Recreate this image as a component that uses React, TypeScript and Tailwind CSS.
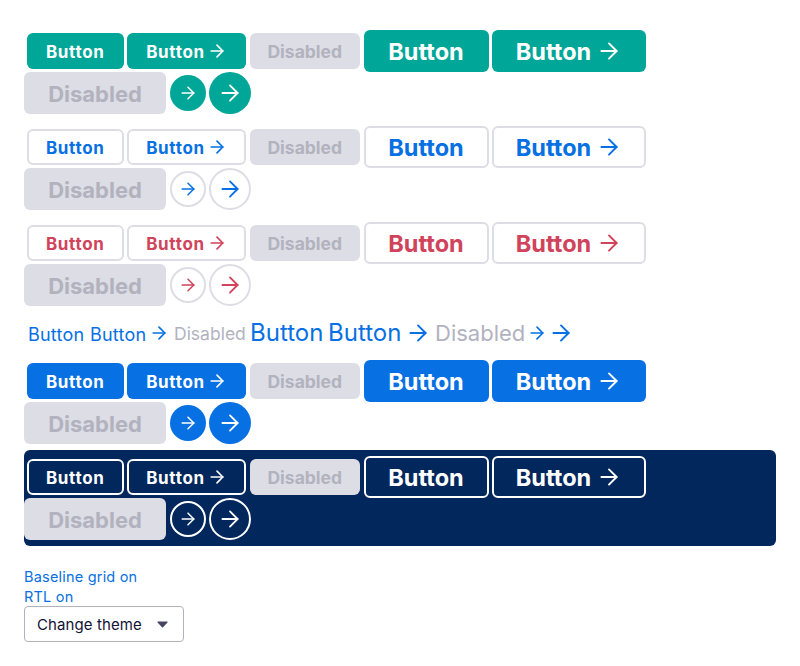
import { ArrowRight } from 'lucide-react';

const font = "font-['Inter','Noto_Sans',sans-serif]";

type Variant = {
  solid: string;
  round: string;
};

const disabledClass = 'bg-[#dddde5] text-[#b2b2bf]';

const ButtonRow = ({ solid, round }: Variant) => (
  <div className="flex flex-wrap items-center gap-x-[3.5px]">
    <div className={`ml-[3px] flex h-9 w-[96.5px] items-center justify-center rounded-md text-[17px] font-bold tracking-[0.7px] ${solid}`}>
      <span className="pt-[3px]">Button</span>
    </div>
    <div className={`flex h-9 w-[119px] items-center justify-center gap-[2px] rounded-md text-[17px] font-bold tracking-[0.7px] ${solid}`}>
      <span className="pt-[3px]">Button</span>
      <ArrowRight size={20} />
    </div>
    <div className={`flex h-9 w-[110.5px] items-center justify-center rounded-md text-[17.5px] font-bold ${disabledClass}`}>
      <span className="pt-[3px]">Disabled</span>
    </div>
    <div className={`flex h-[42px] w-[125px] items-center justify-center rounded-md text-[23.5px] font-bold ${solid}`}>
      <span className="pt-[2px]">Button</span>
    </div>
    <div className={`flex h-[42px] w-[154px] items-center justify-center gap-[5px] rounded-md text-[23.5px] font-bold ${solid}`}>
      <span className="pt-[2px]">Button</span>
      <ArrowRight size={26} strokeWidth={1.8} />
    </div>
    <div className={`flex h-[42px] w-[142px] items-center justify-center rounded-md text-[22px] font-bold ${disabledClass}`}>
      <span className="pt-[3px]">Disabled</span>
    </div>
    <div className={`flex h-9 w-9 items-center justify-center rounded-full ${round}`}>
      <ArrowRight size={20} strokeWidth={1.8} />
    </div>
    <div className={`flex h-[42px] w-[42px] items-center justify-center rounded-full ${round}`}>
      <ArrowRight size={26} strokeWidth={1.7} />
    </div>
  </div>
);

const LinkRow = () => (
  <div className="flex h-[30px] items-center pl-[4px] text-[#0770e3]">
    <span className="w-[62px] pt-[2px] text-[18px] tracking-[0.2px]">Button</span>
    <span className="flex w-[84px] items-center gap-[3px] text-[18px] tracking-[0.2px]">
      <span className="pt-[2px]">Button</span>
      <ArrowRight size={20} />
    </span>
    <span className="w-[76px] pt-[3px] text-[17.5px] text-[#b2b2bf]">Disabled</span>
    <span className="w-[78px] text-[24px]">Button</span>
    <span className="flex w-[107px] items-center gap-[4px] text-[24px]">
      Button <ArrowRight size={26} strokeWidth={1.8} />
    </span>
    <span className="w-[92px] text-[22px] text-[#b2b2bf]">Disabled</span>
    <span className="flex w-[21px] items-center">
      <ArrowRight size={20} />
    </span>
    <ArrowRight size={26} strokeWidth={1.8} />
  </div>
);

export default function App() {
  return (
    <div className={`min-h-[666px] bg-white px-6 pt-[30px] ${font}`}>
      <div className="mb-3">
        <ButtonRow solid="bg-[#00a698] text-white" round="bg-[#00a698] text-white" />
      </div>
      <div className="mb-3">
        <ButtonRow
          solid="border-2 border-[#dddde5] bg-white text-[#0770e3]"
          round="border-2 border-[#dddde5] bg-white text-[#0770e3]"
        />
      </div>
      <div className="mb-3">
        <ButtonRow
          solid="border-2 border-[#dddde5] bg-white text-[#d1435b]"
          round="border-2 border-[#dddde5] bg-white text-[#d1435b]"
        />
      </div>
      <div className="mb-3">
        <LinkRow />
      </div>
      <div className="mb-[6px]">
        <ButtonRow solid="bg-[#0770e3] text-white" round="bg-[#0770e3] text-white" />
      </div>
      <div className="rounded-md bg-[#02275d] py-[6px]">
        <ButtonRow
          solid="border-2 border-white bg-transparent text-white"
          round="border-2 border-white bg-transparent text-white"
        />
      </div>

      <div className="mt-[21px] text-[14.5px] leading-5 tracking-[0.2px] text-[#0770e3]">
        <div>Baseline grid on</div>
        <div>RTL on</div>
      </div>
      <div className="-mt-px flex h-9 w-40 items-center justify-between rounded border border-[#b2b2bf] bg-white pl-[12px] pr-[15px] text-[15px] tracking-[0.1px] text-[#111236]">
        <span className="pt-[3px]">Change theme</span>
        <svg width="11" height="7" viewBox="0 0 11 7" className="fill-[#444560]">
          <path d="M1 0.5h9a.6.6 0 0 1 .45 1L6 6.2a.7.7 0 0 1-1 0L.55 1.5A.6.6 0 0 1 1 .5z" />
        </svg>
      </div>
    </div>
  );
}
